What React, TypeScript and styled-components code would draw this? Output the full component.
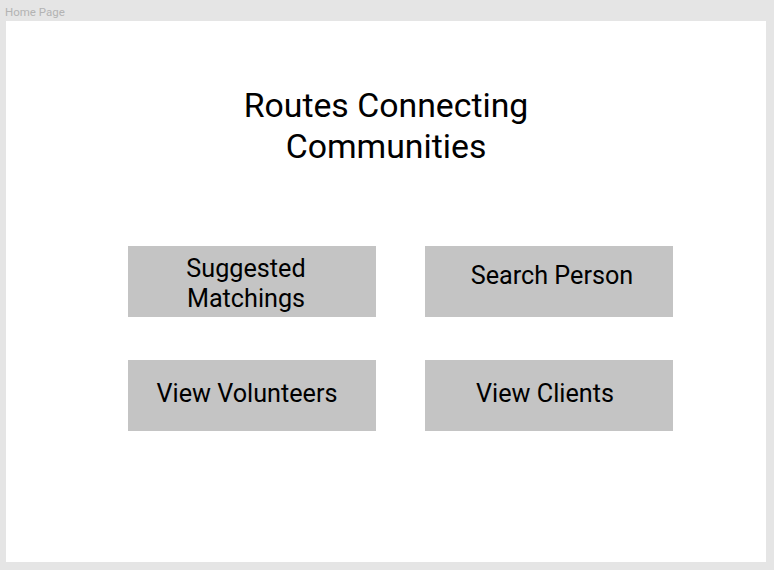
import { createGlobalStyle } from "styled-components";
import styled from "styled-components";

const GlobalStyle = createGlobalStyle`
  html, body {
    margin: 0;
    padding: 0;
    background: #e5e5e5;
  }
  body {
    font-family: Roboto, "Liberation Sans", sans-serif;
  }
`;

const Page = styled.div`
  width: 774px;
  height: 570px;
  padding: 0 8px 8px 6px;
  box-sizing: border-box;
  display: flex;
  flex-direction: column;
`;

const FrameLabel = styled.div`
  height: 21px;
  margin-left: -1px;
  padding-top: 6px;
  box-sizing: border-box;
  font-size: 11.5px;
  line-height: 13px;
  color: #b3b3b3;
`;

const Frame = styled.main`
  flex: 1;
  background: #ffffff;
  display: flex;
  flex-direction: column;
  align-items: center;
`;

const Title = styled.h1`
  margin: 64px 0 0;
  font-size: 33.8px;
  font-weight: 400;
  line-height: 41px;
  text-align: center;
  color: #000000;
`;

const ButtonGrid = styled.div`
  margin: 79px 0 0 29px;
  display: grid;
  grid-template-columns: 248px 248px;
  column-gap: 49px;
  row-gap: 43px;
`;

const NavButton = styled.button<{ $shiftX?: number; $shiftY?: number }>`
  height: 71px;
  border: none;
  background: #c4c4c4;
  padding: 0;
  display: flex;
  align-items: center;
  justify-content: center;
  font-family: Roboto, "Liberation Sans", sans-serif;
  font-size: 25.2px;
  line-height: 30px;
  color: #000000;
  cursor: pointer;

  span {
    transform: translate(${(p) => p.$shiftX ?? 0}px, ${(p) => p.$shiftY ?? 0}px);
  }
`;

const buttons = [
  { label: ["Suggested", "Matchings"], x: -6, y: 2 },
  { label: ["Search Person"], x: 3, y: -6 },
  { label: ["View Volunteers"], x: -5, y: -2 },
  { label: ["View Clients"], x: -4, y: -2 },
];

export default function App() {
  return (
    <>
      <GlobalStyle />
      <Page>
        <FrameLabel>Home Page</FrameLabel>
        <Frame>
          <Title>
            Routes Connecting
            <br />
            Communities
          </Title>
          <ButtonGrid>
            {buttons.map((b) => (
              <NavButton key={b.label.join(" ")} $shiftX={b.x} $shiftY={b.y}>
                <span>
                  {b.label.map((line, i) => (
                    <div key={i}>{line}</div>
                  ))}
                </span>
              </NavButton>
            ))}
          </ButtonGrid>
        </Frame>
      </Page>
    </>
  );
}
